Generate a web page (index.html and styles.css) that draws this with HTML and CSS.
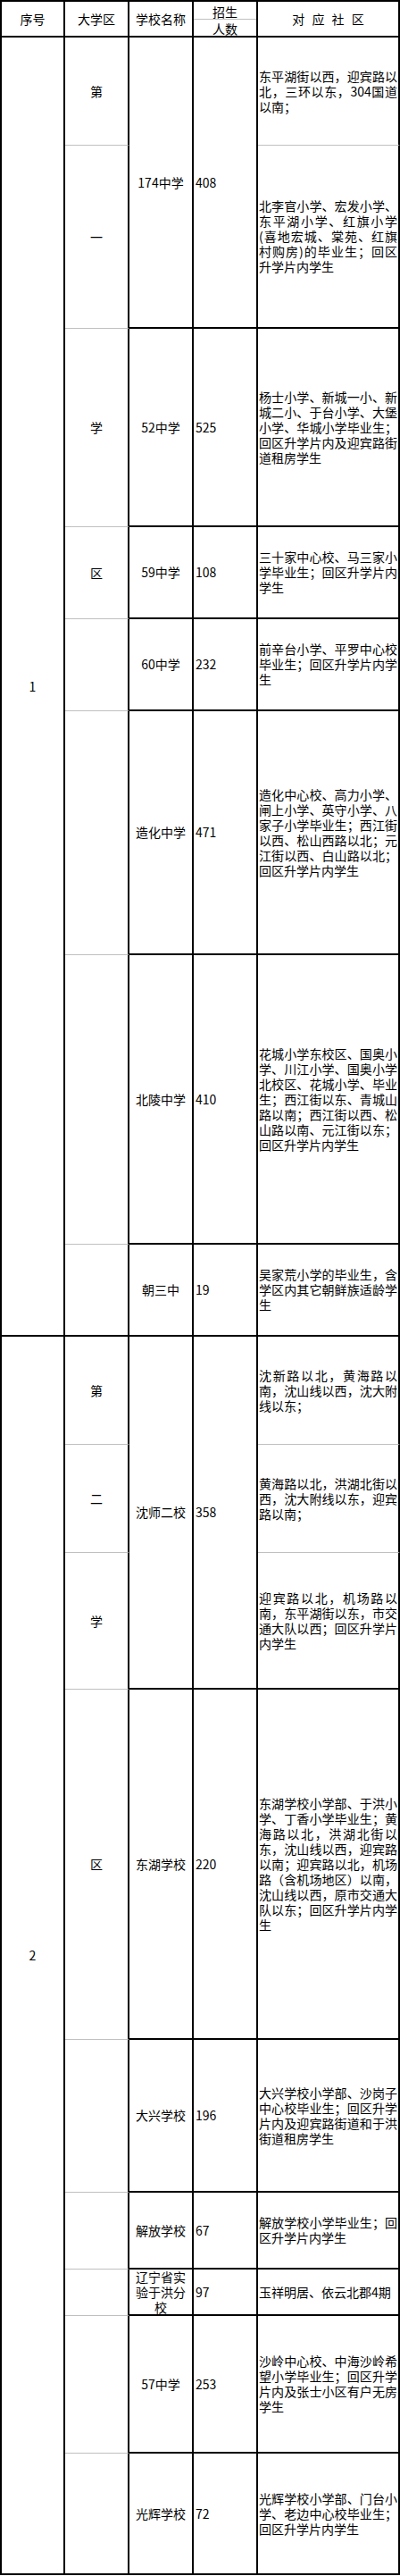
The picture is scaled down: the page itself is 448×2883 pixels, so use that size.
FILE: index.html
```html
<!DOCTYPE html>
<html lang="zh-CN">
<head>
<meta charset="utf-8">
<title>大学区招生对应社区</title>
<link rel="stylesheet" href="styles.css">
</head>
<body>
<div class="sheet">
  <div class="c c1 head">序号</div>
  <div class="c c2 head">大学区</div>
  <div class="c c3 head">学校名称</div>
  <div class="c c4 head split"><div class="top">招生</div><div class="bot">人数</div></div>
  <div class="c c5 head wide">对 应 社 区</div>

  <div class="c c1 span8">1</div>
  <div class="c c2 gray">第</div>
  <div class="c c3 span2 name">174中学</div>
  <div class="c c4 span2 num">408</div>
  <div class="c c5 txt gray"><p>东平湖街以西，迎宾路以北，三环以东，304国道以南；</p></div>

  <div class="c c2 gray">一</div>
  <div class="c c5 txt"><p>北李官小学、宏发小学、东平湖小学、红旗小学(喜地宏城、棠苑、红旗村购房)的毕业生；回区升学片内学生</p></div>

  <div class="c c2 gray">学</div>
  <div class="c c3 name">52中学</div>
  <div class="c c4 num">525</div>
  <div class="c c5 txt"><p>杨士小学、新城一小、新城二小、于台小学、大堡小学、华城小学毕业生；回区升学片内及迎宾路街道租房学生</p></div>

  <div class="c c2 gray">区</div>
  <div class="c c3 name">59中学</div>
  <div class="c c4 num">108</div>
  <div class="c c5 txt"><p>三十家中心校、马三家小学毕业生；回区升学片内学生</p></div>

  <div class="c c2 gray"></div>
  <div class="c c3 name">60中学</div>
  <div class="c c4 num">232</div>
  <div class="c c5 txt"><p>前辛台小学、平罗中心校毕业生；回区升学片内学生</p></div>

  <div class="c c2 gray"></div>
  <div class="c c3 name">造化中学</div>
  <div class="c c4 num">471</div>
  <div class="c c5 txt"><p>造化中心校、高力小学、闸上小学、英守小学、八家子小学毕业生；西江街以西、松山西路以北；元江街以西、白山路以北；回区升学片内学生</p></div>

  <div class="c c2 gray"></div>
  <div class="c c3 name">北陵中学</div>
  <div class="c c4 num">410</div>
  <div class="c c5 txt"><p>花城小学东校区、国奥小学、川江小学、国奥小学北校区、花城小学、毕业生；西江街以东、青城山路以南；西江街以西、松山路以南、元江街以东；回区升学片内学生</p></div>

  <div class="c c2"></div>
  <div class="c c3 name">朝三中</div>
  <div class="c c4 num">19</div>
  <div class="c c5 txt"><p>吴家荒小学的毕业生，含学区内其它朝鲜族适龄学生</p></div>

  <div class="c c1 span9">2</div>
  <div class="c c2 gray">第</div>
  <div class="c c3 span3 name">沈师二校</div>
  <div class="c c4 span3 num">358</div>
  <div class="c c5 txt gray"><p>沈新路以北，黄海路以南，沈山线以西，沈大附线以东；</p></div>

  <div class="c c2 gray">二</div>
  <div class="c c5 txt gray"><p>黄海路以北，洪湖北街以西，沈大附线以东，迎宾路以南；</p></div>

  <div class="c c2 gray">学</div>
  <div class="c c5 txt"><p>迎宾路以北，机场路以南，东平湖街以东，市交通大队以西；回区升学片内学生</p></div>

  <div class="c c2 gray">区</div>
  <div class="c c3 name">东湖学校</div>
  <div class="c c4 num">220</div>
  <div class="c c5 txt"><p>东湖学校小学部、于洪小学、丁香小学毕业生；黄海路以北，洪湖北街以东，沈山线以西，迎宾路以南；迎宾路以北，机场路（含机场地区）以南，沈山线以西，原市交通大队以东；回区升学片内学生</p></div>

  <div class="c c2 gray"></div>
  <div class="c c3 name">大兴学校</div>
  <div class="c c4 num">196</div>
  <div class="c c5 txt"><p>大兴学校小学部、沙岗子中心校毕业生；回区升学片内及迎宾路街道和于洪街道租房学生</p></div>

  <div class="c c2 gray"></div>
  <div class="c c3 name">解放学校</div>
  <div class="c c4 num">67</div>
  <div class="c c5 txt"><p>解放学校小学毕业生；回区升学片内学生</p></div>

  <div class="c c2 gray"></div>
  <div class="c c3 name">辽宁省实验于洪分校</div>
  <div class="c c4 num">97</div>
  <div class="c c5 txt"><p>玉祥明居、依云北郡4期</p></div>

  <div class="c c2 gray"></div>
  <div class="c c3 name">57中学</div>
  <div class="c c4 num">253</div>
  <div class="c c5 txt"><p>沙岭中心校、中海沙岭希望小学毕业生；回区升学片内及张士小区有户无房学生</p></div>

  <div class="c c2"></div>
  <div class="c c3 name">光辉学校</div>
  <div class="c c4 num">72</div>
  <div class="c c5 txt"><p>光辉学校小学部、门台小学、老边中心校毕业生；回区升学片内学生</p></div>
</div>
</body>
</html>
```

FILE: styles.css
```css
html, body {
  margin: 0;
  padding: 0;
  background: #fff;
}

body {
  font-family: "Noto Sans CJK SC", "Liberation Sans", sans-serif;
  font-size: 14px;
  line-height: 17px;
  color: #000;
}

.sheet {
  display: grid;
  width: 448px;
  box-sizing: border-box;
  border-left: 2px solid #000;
  border-top: 2px solid #000;
  grid-template-columns: 71px 72px 72px 72px 159px;
  grid-template-rows: 40px 121px 205px 222px 103px 103px 273px 324px 103px 121px 121px 153px 392px 171px 86px 52px 154px 136px;
}

.c {
  box-sizing: border-box;
  min-width: 0;
  border-right: 2px solid #000;
  border-bottom: 2px solid #000;
  display: flex;
  flex-direction: column;
  justify-content: center;
  align-items: center;
  text-align: center;
}

.c1 { grid-column: 1; }
.c2 { grid-column: 2; }
.c3 { grid-column: 3; }
.c4 { grid-column: 4; }
.c5 { grid-column: 5; }

.span2 { grid-row: span 2; }
.span3 { grid-row: span 3; }
.span8 { grid-row: span 8; }
.span9 { grid-row: span 9; }

.gray {
  border-bottom: 1px solid #c0c0c0;
}

.head.wide {
  word-spacing: 5px;
}

.split {
  justify-content: flex-start;
  align-items: stretch;
}

.split .top {
  height: 20px;
  box-sizing: border-box;
  border-bottom: 1px solid #c0c0c0;
  display: flex;
  align-items: center;
  justify-content: center;
  padding-top: 3px;
}

.split .bot {
  flex: 1;
  display: flex;
  align-items: center;
  justify-content: center;
  padding-top: 2px;
}

.name {
  padding: 0 6px;
}

.num {
  align-items: flex-start;
  padding-left: 2px;
  text-align: left;
}

.txt {
  align-items: stretch;
  padding: 0 1px;
}

.txt p {
  margin: 0;
  text-align: justify;
  text-spacing-trim: space-all;
  line-break: strict;
}
```
